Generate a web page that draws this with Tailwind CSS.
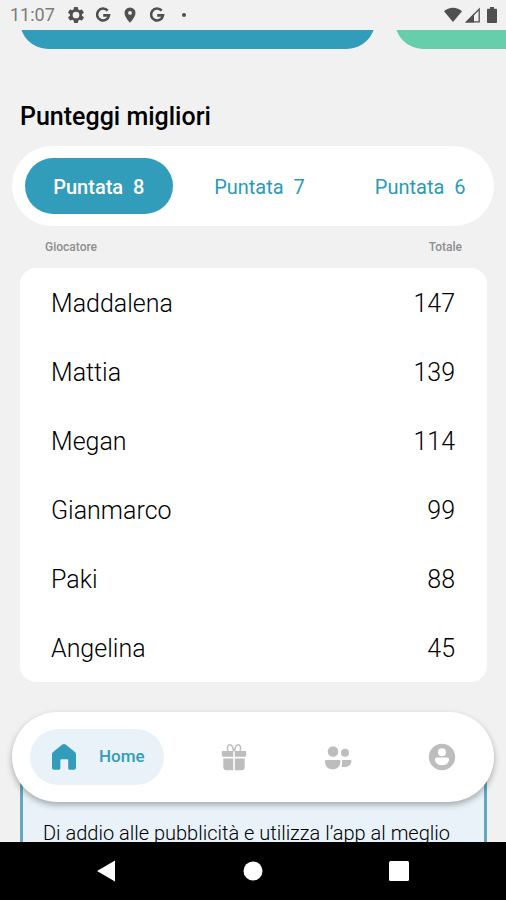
<!DOCTYPE html>
<html lang="it">
<head>
    <meta charset="UTF-8">
    <meta name="viewport" content="width=device-width, initial-scale=1.0">
    <title>Punteggi migliori</title>
    <script src="https://cdn.jsdelivr.net/npm/@tailwindcss/browser@4"></script>
</head>
<body class="flex flex-col h-screen bg-[#f1f1f1] text-[#111] font-['Roboto',sans-serif]">
    <!-- Status bar -->
    <header class="flex items-center justify-between h-[30px] shrink-0 pl-[10px] pr-[6px] text-[#505050]">
        <div class="flex items-center gap-[11px]">
            <span class="mr-[2px] text-lg leading-[30px] text-[#7c7c7c]">11:07</span>
            <svg class="w-4 h-4" viewBox="2 2 20 20" fill="currentColor"><path fill-rule="evenodd" d="M19.4 13a7.800 7.800 0 0 0 0-2l2.100-1.600a.5.5 0 0 0 .1-.7l-2-3.400a.5.5 0 0 0-.6-.2l-2.500 1a7.300 7.300 0 0 0-1.700-1l-.4-2.600a.5.5 0 0 0-.5-.5h-4a.5.5 0 0 0-.5.400l-.4 2.700a7.700 7.700 0 0 0-1.700 1l-2.500-1a.5.5 0 0 0-.6.2l-2 3.400a.5.5 0 0 0 .1.700L4.500 11a7.900 7.900 0 0 0 0 2l-2.100 1.600a.5.5 0 0 0-.1.700l2 3.400c.1.200.4.3.6.2l2.500-1a7.300 7.300 0 0 0 1.700 1l.4 2.600c0 .3.200.5.500.5h4c.2 0 .5-.2.500-.5l.4-2.600a7.700 7.700 0 0 0 1.700-1l2.500 1c.2.100.5 0 .6-.2l2-3.400a.5.5 0 0 0-.1-.7zM12 16.200a4.200 4.200 0 1 1 0-8.400 4.200 4.200 0 0 1 0 8.400z"/></svg>
            <svg class="w-4 h-4" viewBox="0 0 16 16" fill="none" stroke="currentColor" stroke-width="2.600"><path d="M12.700 3.700A6 6 0 1 0 14 8.400H8.200"/></svg>
            <svg class="w-4 h-4" viewBox="0 0 16 16" fill="currentColor"><path fill-rule="evenodd" d="M8 0.500a5.500 5.500 0 0 0-5.500 5.500C2.500 10 8 15.800 8 15.800S13.500 10 13.500 6A5.500 5.500 0 0 0 8 .5zm0 7.300a1.900 1.900 0 1 1 0-3.800 1.900 1.900 0 0 1 0 3.800z"/></svg>
            <svg class="w-4 h-4" viewBox="0 0 16 16" fill="none" stroke="currentColor" stroke-width="2.600"><path d="M12.700 3.700A6 6 0 1 0 14 8.400H8.200"/></svg>
            <svg class="w-4 h-4" viewBox="0 0 16 16" fill="currentColor"><circle cx="8" cy="8" r="2"/></svg>
        </div>
        <div class="flex items-center gap-[3px]">
            <svg class="w-[18px] h-4" viewBox="0 0 18 16" fill="currentColor"><path d="M9 15L0 4.300C2.500 2 5.500 .8 9 .8s6.500 1.200 9 3.500z"/></svg>
            <svg class="w-4 h-4" viewBox="0 0 16 16"><path d="M0 15.500L9 6.500v9z" fill="currentColor"/><path d="M2 14.800L14.200 2v12.800z" fill="none" stroke="currentColor" stroke-width="1.300"/></svg>
            <svg class="w-4 h-4" viewBox="0 0 16 16" fill="currentColor"><path d="M6 0h4v1.800h2c.6 0 1 .4 1 1V15c0 .6-.4 1-1 1H4c-.6 0-1-.4-1-1V2.800c0-.6.4-1 1-1h2z"/></svg>
        </div>
    </header>

    <div class="relative flex-1 min-h-0">
        <main class="h-full overflow-hidden">
            <!-- Cards carousel, scrolled almost out of view -->
            <div class="flex gap-5 pl-5 overflow-hidden">
                <div class="w-[355px] h-14 -mt-[37px] shrink-0 rounded-[28px] bg-[#329dba]"></div>
                <div class="w-[355px] h-14 -mt-[37px] shrink-0 rounded-[28px] bg-[#66ceaa]"></div>
            </div>

            <h1 class="mt-[52px] px-5 text-[25px] leading-8 font-medium text-black">Punteggi migliori</h1>

            <div class="grid grid-cols-3 gap-[13px] mx-3 mt-[13px] py-3 pl-[13px] rounded-[40px] bg-white text-xl text-[#2a9ab8]">
                <button class="h-14 pt-[2px] rounded-full bg-[#329dba] font-medium text-white whitespace-pre">Puntata  8</button>
                <button class="h-14 pt-[2px] rounded-full whitespace-pre">Puntata  7</button>
                <button class="h-14 pt-[2px] rounded-full whitespace-pre">Puntata  6</button>
            </div>

            <div class="pl-5 pr-[19px]">
                <table class="w-full border-separate border-spacing-0 text-[25px] font-light text-black">
                    <thead class="text-xs text-[#8e8e8e]">
                        <tr class="h-[42px]">
                            <th scope="col" class="pl-[25px] text-left font-medium">Giocatore</th>
                            <th scope="col" class="pr-[25px] text-right font-medium">Totale</th>
                        </tr>
                    </thead>
                    <tbody>
                        <tr class="h-[69px]">
                            <td class="pl-[31px] pt-[2px] bg-white rounded-tl-2xl">Maddalena</td>
                            <td class="pr-8 pt-[2px] text-right bg-white rounded-tr-2xl">147</td>
                        </tr>
                        <tr class="h-[69px]">
                            <td class="pl-[31px] pt-[2px] bg-white">Mattia</td>
                            <td class="pr-8 pt-[2px] text-right bg-white">139</td>
                        </tr>
                        <tr class="h-[69px]">
                            <td class="pl-[31px] pt-[2px] bg-white">Megan</td>
                            <td class="pr-8 pt-[2px] text-right bg-white">114</td>
                        </tr>
                        <tr class="h-[69px]">
                            <td class="pl-[31px] pt-[2px] bg-white">Gianmarco</td>
                            <td class="pr-8 pt-[2px] text-right bg-white">99</td>
                        </tr>
                        <tr class="h-[69px]">
                            <td class="pl-[31px] pt-[2px] bg-white">Paki</td>
                            <td class="pr-8 pt-[2px] text-right bg-white">88</td>
                        </tr>
                        <tr class="h-[69px]">
                            <td class="pl-[31px] pt-[2px] bg-white rounded-bl-2xl">Angelina</td>
                            <td class="pr-8 pt-[2px] text-right bg-white rounded-br-2xl">45</td>
                        </tr>
                    </tbody>
                </table>

                <section class="mt-12 pt-[86px] px-5 h-60 rounded-2xl border-[3px] border-[#5faabf] bg-[#e8f2f8]">
                    <p class="text-xl leading-7 font-light text-black whitespace-nowrap">Di addio alle pubblicità e utilizza l’app al meglio</p>
                </section>
            </div>
        </main>

        <!-- Floating tab bar -->
        <nav class="absolute inset-x-3 bottom-10 flex items-center h-[90px] pl-[18px] rounded-[45px] bg-white text-[#bdbdbd] shadow-[0_3px_6px_rgba(0,0,0,0.3)]">
            <a href="#home" class="flex items-center w-[134px] h-14 mr-[18px] pl-5 gap-[21px] rounded-full bg-[#e8f2f8] text-[17px] font-medium text-[#329dba]">
                <svg class="w-7 h-7" viewBox="0 0 28 28" fill="currentColor"><path d="M2 11.500c0-1.200.4-2 1.400-2.800l8.600-6.900c1.300-1 2.700-1 4 0l8.600 6.900c1 .8 1.400 1.600 1.400 2.800v13.200c0 1.300-.7 2-2 2h-4c-1.200 0-1.800-.6-1.800-1.800v-7.400c0-.8-.4-1.200-1.200-1.200h-5.400c-.8 0-1.200.4-1.200 1.200v7.400c0 1.200-.6 1.800-1.800 1.800H4c-1.300 0-2-.7-2-2z"/></svg>
                Home
            </a>
            <a href="#premi" aria-label="Premi" class="flex flex-1 justify-center">
                <svg class="w-7 h-7" viewBox="0 0 28 28" fill="currentColor"><path d="M2.600 8h10.600v5.800H3.600c-1.200 0-1.800-.6-1.800-1.800V8.800c0-.5.3-.8.8-.8zM14.800 8h10.600c.5 0 .8.300.8.8V12c0 1.200-.6 1.800-1.800 1.800h-9.600zM3.300 15.400h9.900v11.800H6.300c-2 0-3-1-3-3zM14.800 15.400h9.900v8.800c0 2-1 3-3 3h-6.900z"/><path d="M13.400 8.200C13 4 11.800 1.800 9.800 1.800S6.600 5 8 7.800M14.600 8.200C15 4 16.200 1.800 18.200 1.800s3.200 3.200 1.800 6" fill="none" stroke="currentColor" stroke-width="1.500"/></svg>
            </a>
            <a href="#amici" aria-label="Amici" class="flex flex-1 justify-center">
                <svg class="w-7 h-7" viewBox="0 0 28 28" fill="currentColor"><circle cx="9" cy="8.500" r="5.300"/><circle cx="21" cy="9.700" r="4"/><path d="M2.300 17h12.800c1 0 1.500.5 1.300 1.500-.4 5.300-3 7.800-7.700 7.800S1.400 23.800 1 18.500c-.1-1 .3-1.500 1.300-1.500zM17.900 17h8.300c1 0 1.400.5 1.200 1.400-.6 3.800-2.900 5.600-6.700 5.600h-2.600c-.5 0-.7-.3-.5-.8.5-1.600.7-3.200.5-5z"/></svg>
            </a>
            <a href="#profilo" aria-label="Profilo" class="flex flex-1 justify-center">
                <svg class="w-7 h-7" viewBox="0 0 28 28" fill="currentColor"><path fill-rule="evenodd" d="M14 .8a13.200 13.200 0 1 0 0 26.400A13.200 13.200 0 0 0 14 .8zm0 4.400a4 4 0 1 1 0 8 4 4 0 0 1 0-8zM9 14.600h10c1.300 0 2.100.9 2 2.100-.3 3.500-3 5.600-7 5.600s-6.700-2.100-7-5.600c-.1-1.200.7-2.100 2-2.100z"/></svg>
            </a>
        </nav>
    </div>

    <!-- System navigation -->
    <footer class="flex items-center justify-center gap-[118px] h-[58px] shrink-0 bg-black text-white">
        <button aria-label="Indietro"><svg class="w-7 h-7" viewBox="0 0 28 28" fill="currentColor"><path d="M22 3.500v21L4 14z"/></svg></button>
        <button aria-label="Schermata Home"><svg class="w-7 h-7" viewBox="0 0 28 28" fill="currentColor"><circle cx="14" cy="14" r="9.500"/></svg></button>
        <button aria-label="Recenti"><svg class="w-7 h-7" viewBox="0 0 28 28" fill="currentColor"><rect x="4" y="4" width="20" height="20" rx="1.500"/></svg></button>
    </footer>
</body>
</html>
